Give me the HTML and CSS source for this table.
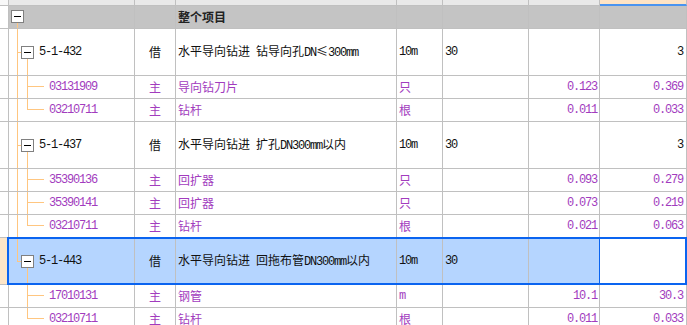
FILE: index.html
```html
<!DOCTYPE html>
<html lang="zh">
<head>
<meta charset="utf-8">
<title>整个项目</title>
<link rel="stylesheet" href="styles.css">
</head>
<body>
<div class="sheet">
  <div class="row strip">
    <div class="c c0"></div><div class="c c1"></div><div class="c c2"></div><div class="c c3"></div><div class="c c4"></div><div class="c c5"></div><div class="c c6"></div><div class="c c7"></div>
  </div>

  <div class="row head">
    <div class="c c0"></div>
    <div class="c c1"><svg width="36" height="22" viewBox="0 0 36 22"><rect class="bx" x="2.5" y="4.5" width="12" height="12"/><line class="mn" x1="5" y1="10.5" x2="12" y2="10.5"/><line class="tl" x1="8.5" y1="17" x2="8.5" y2="22"/></svg></div>
    <div class="c c2"></div>
    <div class="c c3"><span class="t">整个项目</span></div>
    <div class="c c4"></div><div class="c c5"></div><div class="c c6"></div><div class="c c7"></div>
  </div>

  <div class="row par">
    <div class="c c0"></div>
    <div class="c c1"><svg width="30" height="46" viewBox="0 0 30 46"><line class="tl" x1="8.5" y1="0" x2="8.5" y2="46"/><line class="tl" x1="8" y1="23.5" x2="12" y2="23.5"/><line class="tl" x1="18.5" y1="30" x2="18.5" y2="46"/><rect class="bx" x="12.5" y="17.5" width="12" height="12"/><line class="mn" x1="15" y1="23.5" x2="22" y2="23.5"/></svg><span class="a">5-1-432</span></div>
    <div class="c c2">借</div>
    <div class="c c3"><span>水平导向钻进<span class="a"> </span>钻导向孔<span class="a">DN</span>≤<span class="a">300mm</span></span></div>
    <div class="c c4"><span class="a">10m</span></div>
    <div class="c c5"><span class="a">30</span></div>
    <div class="c c6"></div>
    <div class="c c7"><span class="a">3</span></div>
  </div>

  <div class="row ch p">
    <div class="c c0"></div>
    <div class="c c1"><svg width="40" height="22" viewBox="0 0 40 22"><line class="tl" x1="8.5" y1="0" x2="8.5" y2="22"/><line class="tl" x1="18.5" y1="0" x2="18.5" y2="22"/><line class="tl" x1="18" y1="10.5" x2="35" y2="10.5"/></svg><span class="a">03131909</span></div>
    <div class="c c2">主</div>
    <div class="c c3">导向钻刀片</div>
    <div class="c c4">只</div>
    <div class="c c5"></div>
    <div class="c c6"><span class="a">0.123</span></div>
    <div class="c c7"><span class="a">0.369</span></div>
  </div>

  <div class="row ch p">
    <div class="c c0"></div>
    <div class="c c1"><svg width="40" height="22" viewBox="0 0 40 22"><line class="tl" x1="8.5" y1="0" x2="8.5" y2="22"/><line class="tl" x1="18.5" y1="0" x2="18.5" y2="11"/><line class="tl" x1="18" y1="10.5" x2="35" y2="10.5"/></svg><span class="a">03210711</span></div>
    <div class="c c2">主</div>
    <div class="c c3">钻杆</div>
    <div class="c c4">根</div>
    <div class="c c5"></div>
    <div class="c c6"><span class="a">0.011</span></div>
    <div class="c c7"><span class="a">0.033</span></div>
  </div>

  <div class="row par">
    <div class="c c0"></div>
    <div class="c c1"><svg width="30" height="46" viewBox="0 0 30 46"><line class="tl" x1="8.5" y1="0" x2="8.5" y2="46"/><line class="tl" x1="8" y1="23.5" x2="12" y2="23.5"/><line class="tl" x1="18.5" y1="30" x2="18.5" y2="46"/><rect class="bx" x="12.5" y="17.5" width="12" height="12"/><line class="mn" x1="15" y1="23.5" x2="22" y2="23.5"/></svg><span class="a">5-1-437</span></div>
    <div class="c c2">借</div>
    <div class="c c3"><span>水平导向钻进<span class="a"> </span>扩孔<span class="a">DN300mm</span>以内</span></div>
    <div class="c c4"><span class="a">10m</span></div>
    <div class="c c5"><span class="a">30</span></div>
    <div class="c c6"></div>
    <div class="c c7"><span class="a">3</span></div>
  </div>

  <div class="row ch p">
    <div class="c c0"></div>
    <div class="c c1"><svg width="40" height="22" viewBox="0 0 40 22"><line class="tl" x1="8.5" y1="0" x2="8.5" y2="22"/><line class="tl" x1="18.5" y1="0" x2="18.5" y2="22"/><line class="tl" x1="18" y1="10.5" x2="35" y2="10.5"/></svg><span class="a">35390136</span></div>
    <div class="c c2">主</div>
    <div class="c c3">回扩器</div>
    <div class="c c4">只</div>
    <div class="c c5"></div>
    <div class="c c6"><span class="a">0.093</span></div>
    <div class="c c7"><span class="a">0.279</span></div>
  </div>

  <div class="row ch p">
    <div class="c c0"></div>
    <div class="c c1"><svg width="40" height="22" viewBox="0 0 40 22"><line class="tl" x1="8.5" y1="0" x2="8.5" y2="22"/><line class="tl" x1="18.5" y1="0" x2="18.5" y2="22"/><line class="tl" x1="18" y1="10.5" x2="35" y2="10.5"/></svg><span class="a">35390141</span></div>
    <div class="c c2">主</div>
    <div class="c c3">回扩器</div>
    <div class="c c4">只</div>
    <div class="c c5"></div>
    <div class="c c6"><span class="a">0.073</span></div>
    <div class="c c7"><span class="a">0.219</span></div>
  </div>

  <div class="row ch p">
    <div class="c c0"></div>
    <div class="c c1"><svg width="40" height="22" viewBox="0 0 40 22"><line class="tl" x1="8.5" y1="0" x2="8.5" y2="22"/><line class="tl" x1="18.5" y1="0" x2="18.5" y2="11"/><line class="tl" x1="18" y1="10.5" x2="35" y2="10.5"/></svg><span class="a">03210711</span></div>
    <div class="c c2">主</div>
    <div class="c c3">钻杆</div>
    <div class="c c4">根</div>
    <div class="c c5"></div>
    <div class="c c6"><span class="a">0.021</span></div>
    <div class="c c7"><span class="a">0.063</span></div>
  </div>

  <div class="row par sel">
    <div class="c c0"></div>
    <div class="c c1"><svg width="30" height="46" viewBox="0 0 30 46"><line class="tl" x1="8.5" y1="0" x2="8.5" y2="24"/><line class="tl" x1="8" y1="23.5" x2="12" y2="23.5"/><line class="tl" x1="18.5" y1="30" x2="18.5" y2="46"/><rect class="bx" x="12.5" y="17.5" width="12" height="12"/><line class="mn" x1="15" y1="23.5" x2="22" y2="23.5"/></svg><span class="a">5-1-443</span></div>
    <div class="c c2">借</div>
    <div class="c c3"><span>水平导向钻进<span class="a"> </span>回拖布管<span class="a">DN300mm</span>以内</span></div>
    <div class="c c4"><span class="a">10m</span></div>
    <div class="c c5"><span class="a">30</span></div>
    <div class="c c6"></div>
    <div class="c c7"></div>
  </div>

  <div class="row ch p">
    <div class="c c0"></div>
    <div class="c c1"><svg width="40" height="22" viewBox="0 0 40 22"><line class="tl" x1="18.5" y1="0" x2="18.5" y2="22"/><line class="tl" x1="18" y1="10.5" x2="35" y2="10.5"/></svg><span class="a">17010131</span></div>
    <div class="c c2">主</div>
    <div class="c c3">钢管</div>
    <div class="c c4"><span class="a">m</span></div>
    <div class="c c5"></div>
    <div class="c c6"><span class="a">10.1</span></div>
    <div class="c c7"><span class="a">30.3</span></div>
  </div>

  <div class="row ch p">
    <div class="c c0"></div>
    <div class="c c1"><svg width="40" height="22" viewBox="0 0 40 22"><line class="tl" x1="18.5" y1="0" x2="18.5" y2="11"/><line class="tl" x1="18" y1="10.5" x2="35" y2="10.5"/></svg><span class="a">03210711</span></div>
    <div class="c c2">主</div>
    <div class="c c3">钻杆</div>
    <div class="c c4">根</div>
    <div class="c c5"></div>
    <div class="c c6"><span class="a">0.011</span></div>
    <div class="c c7"><span class="a">0.033</span></div>
  </div>
</div>
</body>
</html>
```

FILE: styles.css
```css
* { box-sizing: border-box; }

body {
  margin: 0;
  width: 687px;
  height: 325px;
  overflow: hidden;
  background: #fff;
  font-family: "Noto Sans CJK SC", sans-serif;
  font-size: 12px;
  line-height: 14px;
  color: #111;
}

.sheet { width: 687px; }

.row {
  display: grid;
  grid-template-columns: 9px 126px 41px 221px 46px 86px 71px 87px;
}

.c {
  display: flex;
  align-items: center;
  min-width: 0;
  overflow: hidden;
  white-space: nowrap;
  border-right: 1px solid #c0c0c0;
  border-bottom: 1px solid #c0c0c0;
}

.c1 svg { display: block; flex: none; }
.tl { stroke: #ffc680; stroke-width: 1; shape-rendering: crispEdges; }
.bx { fill: #fff; stroke: #808080; stroke-width: 1; shape-rendering: crispEdges; }
.mn { stroke: #000; stroke-width: 1; shape-rendering: crispEdges; }

.a {
  font-family: "Liberation Mono", monospace;
  letter-spacing: -1.2px;
}

.p { color: #a23cbe; }

.c2 { justify-content: center; }
.c3, .c4, .c5 { padding-left: 2px; }
.c6 { justify-content: flex-end; padding-right: 2px; }
.c7 { justify-content: flex-end; padding-right: 3px; }

.strip { height: 6px; }
.strip .c { background: #e9e9e9; }
.strip .c0 { background: #f8f8f8; }
.strip .c7 { background: #fde3c5; border-bottom: 2px solid #4a94f0; }

.head { height: 23px; }
.head .c { background: #c4c4c4; }
.head .c0 { background: #fff; }
.head .t { font-weight: bold; color: #222; }

.par { height: 47px; }
.ch { height: 23px; }

.sel { position: relative; }
.sel .c { background: #b5d5ff; }
.sel .c0 { background: #fde6c8; }
.sel .c6 { border-right-color: #0a64f0; }
.sel .c7 { background: #fff; }
.sel::after {
  content: "";
  position: absolute;
  left: 7px;
  right: 0;
  top: -1px;
  bottom: 0;
  border: 2px solid #0a64f0;
  pointer-events: none;
}
```
